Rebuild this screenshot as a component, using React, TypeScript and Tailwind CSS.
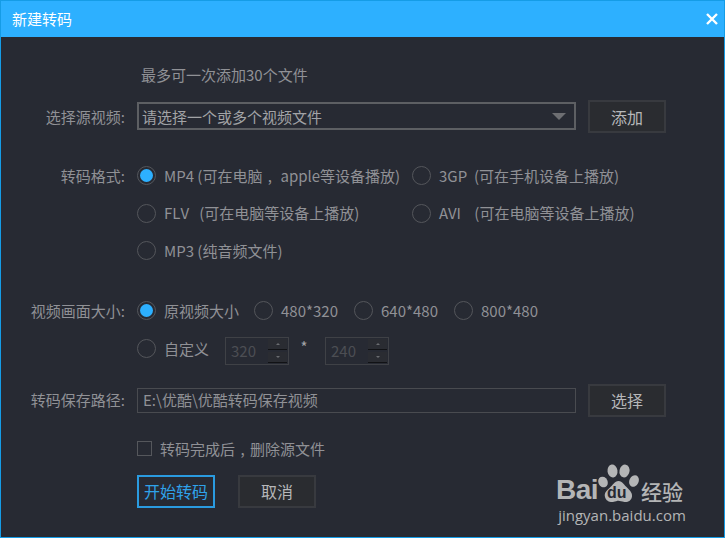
import type { ReactNode } from "react";

function Radio({ checked = false }: { checked?: boolean }) {
  return (
    <span className="flex size-[19px] shrink-0 items-center justify-center rounded-full border-[1.5px] border-[#54565b]">
      {checked && <span className="size-[13px] rounded-full bg-[#2db0ff]" />}
    </span>
  );
}

function Option({ text, checked, className = "" }: { text: ReactNode; checked?: boolean; className?: string }) {
  return (
    <div className={`flex items-center whitespace-pre ${className}`}>
      <Radio checked={checked} />
      <span className="ml-2">{text}</span>
    </div>
  );
}

function Label({ text }: { text: string }) {
  return <div className="mr-[12px] w-[124px] shrink-0 text-right whitespace-nowrap">{text}</div>;
}

// comma sits in the middle of a full-width cell in the screenshot
function Comma() {
  return <span className="inline-block w-[15px] text-center">,</span>;
}

function Spin({ value }: { value: string }) {
  return (
    <div className="mt-[5px] flex h-[28px] w-[64px] items-center justify-between border border-[#3f4146] pr-[1px] pl-[5px] text-[#4c4e53]">
      <span>{value}</span>
      <div className="flex h-[24px] w-[19px] flex-col gap-[2px]">
        <div className="flex flex-1 items-center justify-center border-b border-[#111215] bg-[#2a2c32]">
          <span className="h-0 w-0 border-x-[2px] border-b-[2px] border-x-transparent border-b-[#6a6c70]" />
        </div>
        <div className="flex flex-1 items-center justify-center border-b border-[#111215] bg-[#2a2c32]">
          <span className="h-0 w-0 border-x-[2px] border-t-[2px] border-x-transparent border-t-[#6a6c70]" />
        </div>
      </div>
    </div>
  );
}

function Btn({ text, primary = false, className = "" }: { text: string; primary?: boolean; className?: string }) {
  return (
    <button
      className={`flex h-[33px] w-[78px] items-center justify-center border-2 text-[16px] ${
        primary ? "border-[#2a9be0] bg-[#272a33] text-[#2fa3ea]" : "border-[#383a3f] bg-[#2a2c30] text-[#b6b7b9]"
      } ${className}`}
    >
      {text}
    </button>
  );
}

function Watermark() {
  return (
    <div className="absolute top-[460px] left-[555px] flex w-[132px] flex-col items-center text-[#b4b5b6]">
      <div className="flex h-[44px] w-full items-end">
        <span className="text-[28px] leading-[30px] font-bold tracking-[-0.5px] [font-family:'Liberation_Sans',sans-serif]">Bai</span>
        <span className="relative h-[44px] w-[41px] shrink-0">
          <svg viewBox="0 0 41 44" className="absolute inset-0 size-full" fill="currentColor">
            <ellipse cx="5" cy="21" rx="4.6" ry="5.5" transform="rotate(-25 5 21)" />
            <ellipse cx="14.5" cy="10" rx="5" ry="6.5" transform="rotate(-8 14.5 10)" />
            <ellipse cx="26.5" cy="10" rx="5" ry="6.5" transform="rotate(12 26.5 10)" />
            <ellipse cx="36" cy="20" rx="4.6" ry="6" transform="rotate(25 36 20)" />
            <path d="M20.5 20c-4 0-5.500 4-9 7-3 2.500-5.500 5-4.500 9 1 4 5 5.500 8 5 3-.5 3.800-1.200 5.500-1.200s3 .8 6 1.200c3.500.4 7-1.500 7.500-5.500.5-3.500-2-6-4.500-8.500-3.500-3-5-7-9-7Z" />
          </svg>
          <span className="absolute top-[24px] left-[9px] text-[16px] leading-[16px] font-bold text-[#272a33] [font-family:'Liberation_Sans',sans-serif]">du</span>
        </span>
        <span className="ml-[2px] text-[21px] leading-[28px] font-medium">经验</span>
      </div>
      <div className="mt-[1px] text-[15px] leading-[18px] whitespace-nowrap [font-family:'Open_Sans',sans-serif]">jingyan.baidu.com</div>
    </div>
  );
}

export default function App() {
  return (
    <div className="relative h-[538px] w-[725px] overflow-hidden border border-[#159ce6] bg-[#272a33] text-[15px] leading-5 text-[#909196] [font-family:'Noto_Sans_CJK_SC',sans-serif]">
      <div className="flex h-[36px] items-center justify-between bg-[#2db0ff] pr-[6px] pl-[11px] text-white">
        <span>新建转码</span>
        <svg width="12" height="12" viewBox="0 0 12 12" stroke="white" strokeWidth="2.4">
          <path d="M1 1l10 10M11 1L1 11" />
        </svg>
      </div>

      <div className="pt-[28px]">
        <div className="pl-[140px]">最多可一次添加30个文件</div>

        <div className="mt-[15px] flex h-[33px] items-center">
          <Label text="选择源视频:" />
          <div className="mb-[1px] flex h-[28px] w-[439px] items-center justify-between border-2 border-[#5d5f63] pt-[1px] pr-[8px] pl-[3px] text-[#a2a3a6]">
            <span>请选择一个或多个视频文件</span>
            <span className="h-0 w-0 border-x-[7px] border-t-[7px] border-x-transparent border-t-[#6d6e72]" />
          </div>
          <Btn text="添加" className="ml-[12px]" />
        </div>

        <div className="mt-[24px] flex h-[37.5px] items-center">
          <Label text="转码格式:" />
          <Option
            className="w-[275px]"
            checked
            text={
              <>
                MP4 (可在电脑<Comma />
                <span className="ml-[3px]">apple等设备播放)</span>
              </>
            }
          />
          <Option text="3GP  (可在手机设备上播放)" />
        </div>
        <div className="flex h-[37.5px] items-center pl-[136px]">
          <Option className="w-[275px]" text="FLV   (可在电脑等设备上播放)" />
          <Option text="AVI    (可在电脑等设备上播放)" />
        </div>
        <div className="flex h-[37.5px] items-center pl-[136px]">
          <Option text="MP3 (纯音频文件)" />
        </div>

        <div className="mt-[22px] flex h-[38px] items-center">
          <Label text="视频画面大小:" />
          <Option className="w-[117px]" checked text="原视频大小" />
          <Option className="w-[100px]" text="480*320" />
          <Option className="w-[100px]" text="640*480" />
          <Option text="800*480" />
        </div>
        <div className="flex h-[38px] items-center pl-[136px]">
          <Option className="w-[88px]" text="自定义" />
          <Spin value="320" />
          <span className="w-[36px] pr-[6px] pb-[4px] text-center text-[#a2a3a6]">*</span>
          <Spin value="240" />
        </div>

        <div className="mt-[16px] flex h-[33px] items-center">
          <Label text="转码保存路径:" />
          <div className="flex h-[25px] w-[439px] items-center border border-[#494b50] pl-[5px]">
            E:\优酷\优酷转码保存视频
          </div>
          <Btn text="选择" className="ml-[12px]" />
        </div>

        <div className="mt-[22px] flex h-[20px] items-center pl-[136px]">
          <span className="size-[15px] border border-[#55575c]" />
          <span className="ml-[8px]">转码完成后<Comma />删除源文件</span>
        </div>

        <div className="mt-[16px] flex pl-[136px]">
          <Btn text="开始转码" primary />
          <Btn text="取消" className="ml-[23px]" />
        </div>
      </div>

      <Watermark />
    </div>
  );
}
